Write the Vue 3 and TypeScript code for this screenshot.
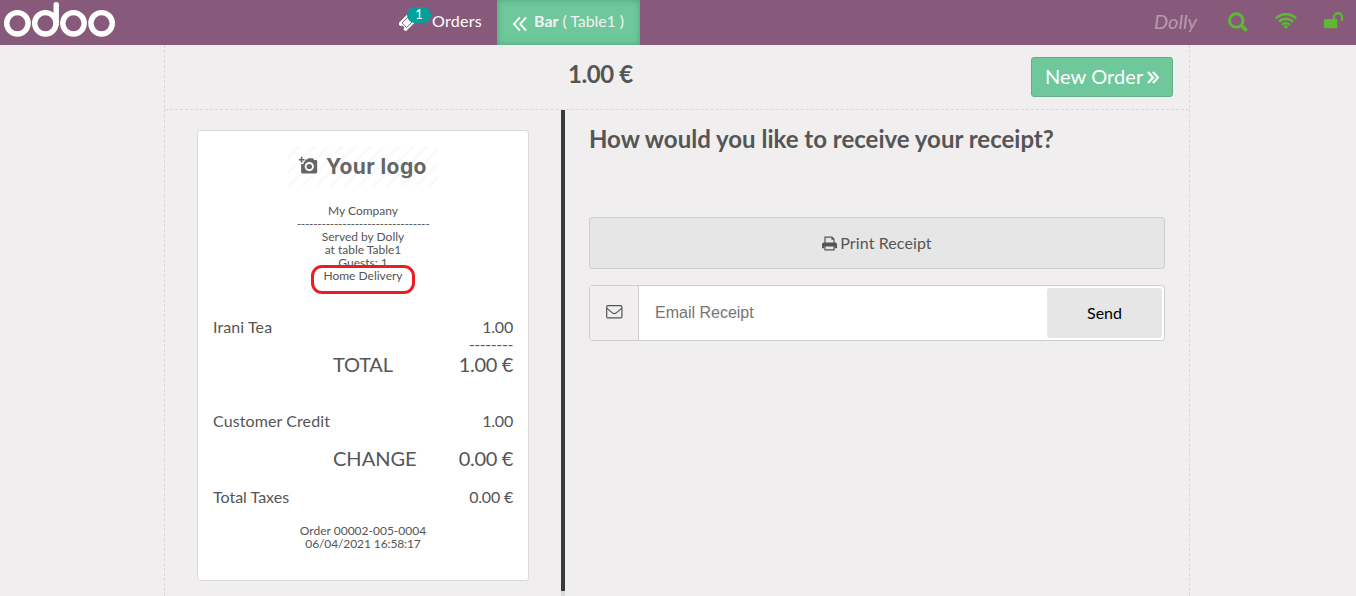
<script setup lang="ts">
interface Line {
  label: string
  amount: string
  kind: string
}

const header: string[] = ['Served by Dolly', 'at table Table1', 'Guests: 1']
const payments: Line[] = [
  { label: 'Customer Credit', amount: '1.00', kind: 'credit' },
  { label: 'CHANGE', amount: '0.00 €', kind: 'large change' },
  { label: 'Total Taxes', amount: '0.00 €', kind: 'taxes' },
]
</script>

<template>
  <div class="pos">
    <header class="topbar">
      <svg class="brand" width="116" height="45" viewBox="0 0 116 45" fill="none" stroke="#fff" stroke-width="5.4">
        <circle cx="17.4" cy="23.3" r="10.7" />
        <circle cx="45.4" cy="23.3" r="10.7" />
        <circle cx="73.5" cy="23.3" r="10.7" />
        <circle cx="101.6" cy="23.3" r="10.7" />
        <path d="M56.2 24V4.8" stroke-linecap="round" />
      </svg>
      <div class="orders">
        <span class="ticket">
          <svg width="17" height="17" viewBox="0 0 17 17">
            <g transform="rotate(-45 8.5 8)">
              <path fill="#fff" d="M.5 2.500h16v3.400a2.100 2.100 0 0 0 0 4.200v3.400H.5v-3.400a2.100 2.100 0 0 0 0-4.200z" />
              <path fill="none" stroke="#875a7b" stroke-width=".9" d="M4 4.800h9v6.400H4z" />
            </g>
          </svg>
          <span class="badge">1</span>
        </span>
        <span class="orders-label">Orders</span>
      </div>
      <div class="table-tab">
        <svg width="14" height="16" viewBox="0 0 14 16" fill="none" stroke="#fff" stroke-opacity=".9" stroke-width="1.9">
          <path d="M6.800 1.500.9 8l5.900 6.500M13 1.500 7.100 8l5.900 6.500" />
        </svg>
        <span class="floor"><b>Bar</b> <span class="table-name">( Table1 )</span></span>
      </div>
      <div class="status">
        <span class="user">Dolly</span>
        <svg class="search" width="20" height="20" viewBox="0 0 20 20" fill="none" stroke="#5fb832">
          <circle cx="8.300" cy="8.500" r="6.800" stroke-width="3" />
          <path d="m13.300 13.500 4.300 4.300" stroke-width="3.400" stroke-linecap="round" />
        </svg>
        <svg class="wifi" width="22" height="17" viewBox="0 0 22 17" fill="none" stroke="#5fb832" stroke-width="2.700">
          <path d="M.9 5.400a14.300 14.300 0 0 1 20.200 0M4.100 8.700a9.800 9.800 0 0 1 13.800 0M7.200 11.900a5.400 5.400 0 0 1 7.600 0" />
          <path d="m8.700 13.600 2.300 2.600 2.300-2.600a3.400 3.400 0 0 0-4.600 0z" fill="#5fb832" stroke="none" />
        </svg>
        <svg class="lock" width="20" height="17" viewBox="0 0 20 17">
          <rect y="7" width="13.300" height="9.300" rx="1" fill="#5fb832" />
          <path d="M10 7.200V5.200a4 4 0 0 1 8 0v3" fill="none" stroke="#5fb832" stroke-width="2.200" stroke-linecap="round" />
        </svg>
      </div>
    </header>

    <main class="screen">
      <div class="screen-head">
        <h1>1.00 €</h1>
        <button class="next">
          <span>New Order</span>
          <svg width="12" height="13" viewBox="0 0 12 13" fill="none" stroke="#fff" stroke-width="2.200">
            <path d="m1 1 5 5.500-5 5.500M6 1l5 5.500L6 12" />
          </svg>
        </button>
      </div>

      <div class="content">
        <section class="preview">
          <article class="receipt">
            <div class="company-logo">
              <svg width="20" height="19" viewBox="0 0 20 19">
                <path fill="#666" fill-rule="evenodd" d="M7.200 3.500h2l1-1.300h4.600l1.400 1.800h1.600a1.400 1.400 0 0 1 1.400 1.400v10.700a1.400 1.400 0 0 1-1.400 1.400H4.500a1.400 1.400 0 0 1-1.400-1.400V8h2.600V5.500h1.500zM11.300 6a4.600 4.600 0 1 0 0 9.200 4.600 4.600 0 0 0 0-9.200zm0 1.900a2.700 2.700 0 1 1 0 5.400 2.700 2.700 0 0 1 0-5.400z" />
                <path stroke="#666" stroke-width="1.600" d="M3.600.8v5.800M.8 3.700h5.600" />
              </svg>
              <span>Your logo</span>
            </div>
            <div class="contact">
              <div>My Company</div>
              <div class="rule">--------------------------------</div>
              <div v-for="text in header" :key="text">{{ text }}</div>
              <div class="delivery">Home Delivery<span class="highlight"></span></div>
            </div>
            <div class="line item"><span>Irani Tea</span><span class="amount">1.00</span></div>
            <div class="sum-rule">--------</div>
            <div class="line large total"><span>TOTAL</span><span class="amount">1.00 €</span></div>
            <div v-for="p in payments" :key="p.label" class="line" :class="p.kind">
              <span>{{ p.label }}</span><span class="amount">{{ p.amount }}</span>
            </div>
            <footer class="order-data">
              <div>Order 00002-005-0004</div>
              <div class="date">06/04/2021 16:58:17</div>
            </footer>
          </article>
        </section>
        <div class="divider"></div>
        <section class="options">
          <h2>How would you like to receive your receipt?</h2>
          <button class="print">
            <svg width="15" height="15" viewBox="0 0 15 15">
              <path d="M3 7V1.200h7l2 2V7M10 1.200v2h2" fill="none" stroke="#555" stroke-width="1.200" />
              <path d="M1.800 6.500h11.400A1.800 1.800 0 0 1 15 8.300v3.900h-2.400v-1.700H2.400v1.700H0V8.300a1.800 1.800 0 0 1 1.800-1.800z" fill="#555" />
              <path d="M3 10.500v3.300h9v-3.300" fill="none" stroke="#555" stroke-width="1.200" />
            </svg>
            <span>Print Receipt</span>
          </button>
          <div class="email">
            <span class="mail">
              <svg width="17" height="14" viewBox="0 0 17 14" fill="none" stroke="#555" stroke-width="1.200">
                <rect x=".7" y=".7" width="15.200" height="12.200" rx="1.200" />
                <path d="M.8 3.200c2 2 4 3.400 5.800 4.800 1.300 1 2.100 1 3.400 0 1.800-1.400 3.800-2.800 5.800-4.800" />
              </svg>
            </span>
            <input type="text" placeholder="Email Receipt" />
            <button class="send">Send</button>
          </div>
        </section>
      </div>
    </main>
  </div>
</template>

<style>
body {
  margin: 0;
  overflow: hidden;
}
</style>

<style scoped>
* {
  box-sizing: border-box;
}
.pos {
  width: 1356px;
  height: 596px;
  overflow: hidden;
  background: #f0eeee;
  color: #555;
  font-family: Lato, "Liberation Sans", sans-serif;
  font-size: 16px;
}
button,
input {
  margin: 0;
  font-family: inherit;
  font-size: 16px;
}
.topbar {
  display: flex;
  height: 45px;
  background: #875a7b;
  color: #fff;
}
.brand {
  flex: none;
}
.orders {
  display: flex;
  width: 381px;
  padding-left: 283px;
  line-height: 41px;
}
.orders-label {
  letter-spacing: 0.3px;
}
.ticket {
  position: relative;
  width: 33px;
  flex: none;
}
.ticket svg {
  display: block;
  margin-top: 14px;
}
.badge {
  position: absolute;
  left: 8px;
  top: 7px;
  width: 24px;
  height: 16px;
  border-radius: 8px;
  background: #00a09d;
  font-size: 13px;
  line-height: 15px;
  text-align: center;
}
.table-tab {
  display: flex;
  width: 143px;
  padding-left: 16px;
  background: #6ec89b;
  box-shadow: inset 0 0 6px rgba(0, 60, 30, 0.28);
  line-height: 41px;
  color: #f2f2f2;
  white-space: nowrap;
}
.table-tab svg {
  flex: none;
  margin: 16px 7px 0 0;
}
.table-name {
  letter-spacing: -0.1px;
}
.status {
  display: flex;
  flex: 1;
  padding-left: 514px;
}
.user {
  width: 74px;
  color: #b79bb0;
  font-size: 20px;
  font-style: italic;
  line-height: 43px;
}
.search {
  margin: 12px 27px 0 0;
}
.wifi {
  margin: 13px 27px 0 0;
}
.lock {
  margin-top: 12px;
}
.screen {
  width: 1026px;
  height: 551px;
  margin: 0 auto 0 164px;
  border: dashed #d8d8d8;
  border-width: 0 1px;
}
.screen-head {
  display: flex;
  height: 65px;
  border-bottom: 1px dashed #d8d8d8;
}
h1 {
  width: 463px;
  margin: 0 0 0 403px;
  font-size: 24px;
  letter-spacing: -0.4px;
  line-height: 57px;
}
.next {
  display: flex;
  align-items: center;
  gap: 4px;
  width: 142px;
  height: 40px;
  margin-top: 12px;
  padding: 0 13px;
  border: 1px solid #64af8a;
  border-radius: 3px;
  background: #6ec89b;
  color: #fff;
  font-size: 20px;
  white-space: nowrap;
}
.next span {
  padding-bottom: 2px;
  letter-spacing: 0.08px;
}
.next svg {
  flex: none;
}
.content {
  display: flex;
  height: 486px;
}
.preview {
  width: 396px;
  padding: 20px 32px;
}
.receipt {
  width: 332px;
  height: 451px;
  padding: 15px;
  border: 1px solid #dcdada;
  border-radius: 3px;
  background: #fff;
}
.company-logo {
  display: flex;
  width: 150px;
  height: 40px;
  margin: 0 auto;
  padding: 0 0 1px 10px;
  align-items: center;
  gap: 8px;
  background: repeating-linear-gradient(135deg, #fff 0 7px, #fafafa 7px 10px);
  color: #666;
  font-family: Inter, Lato, sans-serif;
  font-size: 21px;
  font-weight: 700;
  white-space: nowrap;
}
.company-logo span {
  padding-top: 2px;
  letter-spacing: 0.4px;
}
.contact {
  margin-top: 18px;
  font-size: 12px;
  line-height: 13px;
  text-align: center;
}
.rule {
  letter-spacing: -0.31px;
}
.delivery {
  position: relative;
}
.highlight {
  position: absolute;
  left: 98px;
  top: -4px;
  width: 104px;
  height: 29px;
  border: 3px solid #ed1c24;
  border-radius: 11px;
}
.line {
  display: flex;
  justify-content: space-between;
  height: 20px;
  line-height: 20px;
  letter-spacing: 0.1px;
}
.amount {
  letter-spacing: -0.2px;
}
.large {
  padding-left: 120px;
  height: 26px;
  font-size: 20px;
  line-height: 26px;
  letter-spacing: 0;
}
.large .amount {
  letter-spacing: -0.35px;
}
.item {
  margin-top: 35px;
}
.sum-rule {
  height: 14px;
  line-height: 14px;
  letter-spacing: -0.4px;
  text-align: right;
}
.total {
  letter-spacing: -0.2px;
}
.credit {
  margin-top: 34px;
}
.change {
  margin-top: 14px;
}
.taxes {
  margin-top: 16px;
  letter-spacing: 0;
}
.order-data {
  margin-top: 17px;
  font-size: 12px;
  line-height: 13px;
  text-align: center;
}
.date {
  letter-spacing: -0.1px;
}
.divider {
  width: 4px;
  height: 481px;
  background: #3a3a3a;
  box-shadow: 0 5px #d9d9d9;
}
.options {
  width: 624px;
  padding: 15px 24px 0;
}
h2 {
  height: 92px;
  margin: 0;
  font-size: 24px;
  line-height: 27px;
}
.print {
  display: flex;
  width: 576px;
  height: 52px;
  padding: 0;
  align-items: center;
  justify-content: center;
  gap: 3px;
  border: 1px solid #cecece;
  border-radius: 3px;
  background: #e6e6e6;
  color: #555;
}
.print span {
  padding-bottom: 2px;
  letter-spacing: 0.1px;
}
.email {
  display: flex;
  width: 576px;
  height: 56px;
  margin-top: 16px;
  padding-right: 2px;
  align-items: center;
  border: 1px solid #cecece;
  border-radius: 3px;
  background: #fff;
}
.mail {
  display: flex;
  width: 49px;
  height: 54px;
  align-items: center;
  padding: 0 0 2px 16px;
  border-right: 1px solid #cecece;
  background: #f0eeee;
}
input {
  flex: 1;
  min-width: 0;
  height: 54px;
  padding: 0 16px;
  border: 0;
  background: #fff;
  font-family: "Liberation Sans", Arial, sans-serif;
}
input::placeholder {
  color: #757575;
}
.send {
  width: 115px;
  height: 50px;
  padding: 0 0 2px;
  border: 0;
  border-radius: 3px;
  background: #e6e6e6;
  color: #000;
}
</style>
